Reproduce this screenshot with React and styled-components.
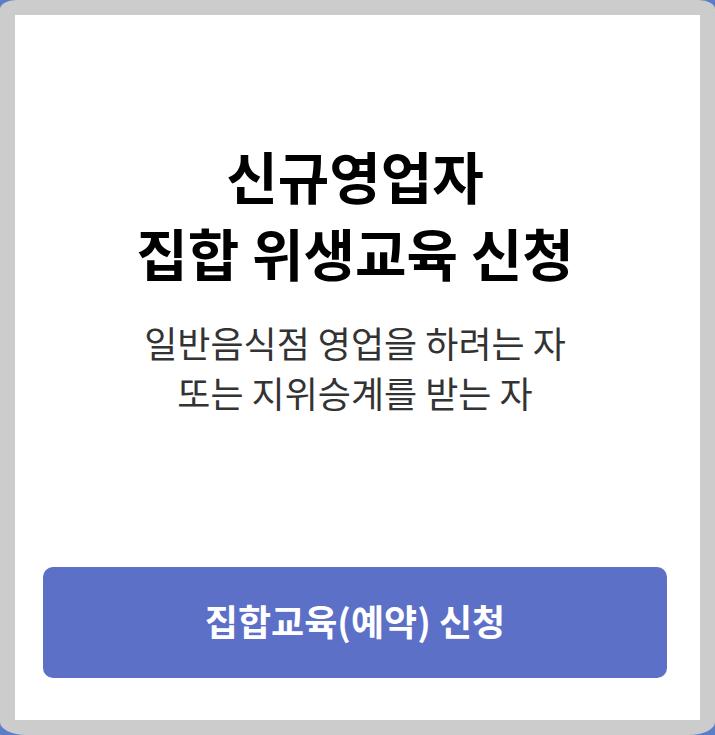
import React from "react";
import styled, { createGlobalStyle } from "styled-components";

const Global = createGlobalStyle`
  html, body {
    margin: 0;
    padding: 0;
    background: #5a7ec7;
  }
  body {
    font-family: "Noto Sans CJK KR", "Noto Sans", sans-serif;
  }
  * { box-sizing: border-box; }
`;

const Frame = styled.div`
  width: 715px;
  height: 735px;
  background: #cccccc;
  border-radius: 16px 16px 26px 26px / 9px 9px 13px 13px;
  padding: 15px;
  display: flex;
`;

const Card = styled.main`
  flex: 1;
  background: #ffffff;
  display: flex;
  flex-direction: column;
  align-items: center;
  padding: 121px 33px 42px 28px;
`;

const Title = styled.h1`
  margin: 0;
  font-size: 56px;
  line-height: 1.375;
  font-weight: 700;
  color: #000000;
  text-align: center;
`;

const Lead = styled.p`
  margin: 27px 0 0;
  font-size: 36px;
  line-height: 1.4;
  font-weight: 400;
  color: #333333;
  text-align: center;
`;

const ApplyButton = styled.button`
  margin-top: auto;
  align-self: stretch;
  height: 111px;
  padding: 0 0 6px;
  border: none;
  border-radius: 10px;
  background: #5c70c8;
  color: #ffffff;
  font-family: inherit;
  font-size: 36px;
  font-weight: 700;
  cursor: pointer;
`;

export default function App() {
  return (
    <>
      <Global />
      <Frame>
        <Card>
          <Title>
            신규영업자
            <br />
            집합 위생교육 신청
          </Title>
          <Lead>
            일반음식점 영업을 하려는 자
            <br />
            또는 지위승계를 받는 자
          </Lead>
          <ApplyButton type="button">집합교육(예약) 신청</ApplyButton>
        </Card>
      </Frame>
    </>
  );
}
